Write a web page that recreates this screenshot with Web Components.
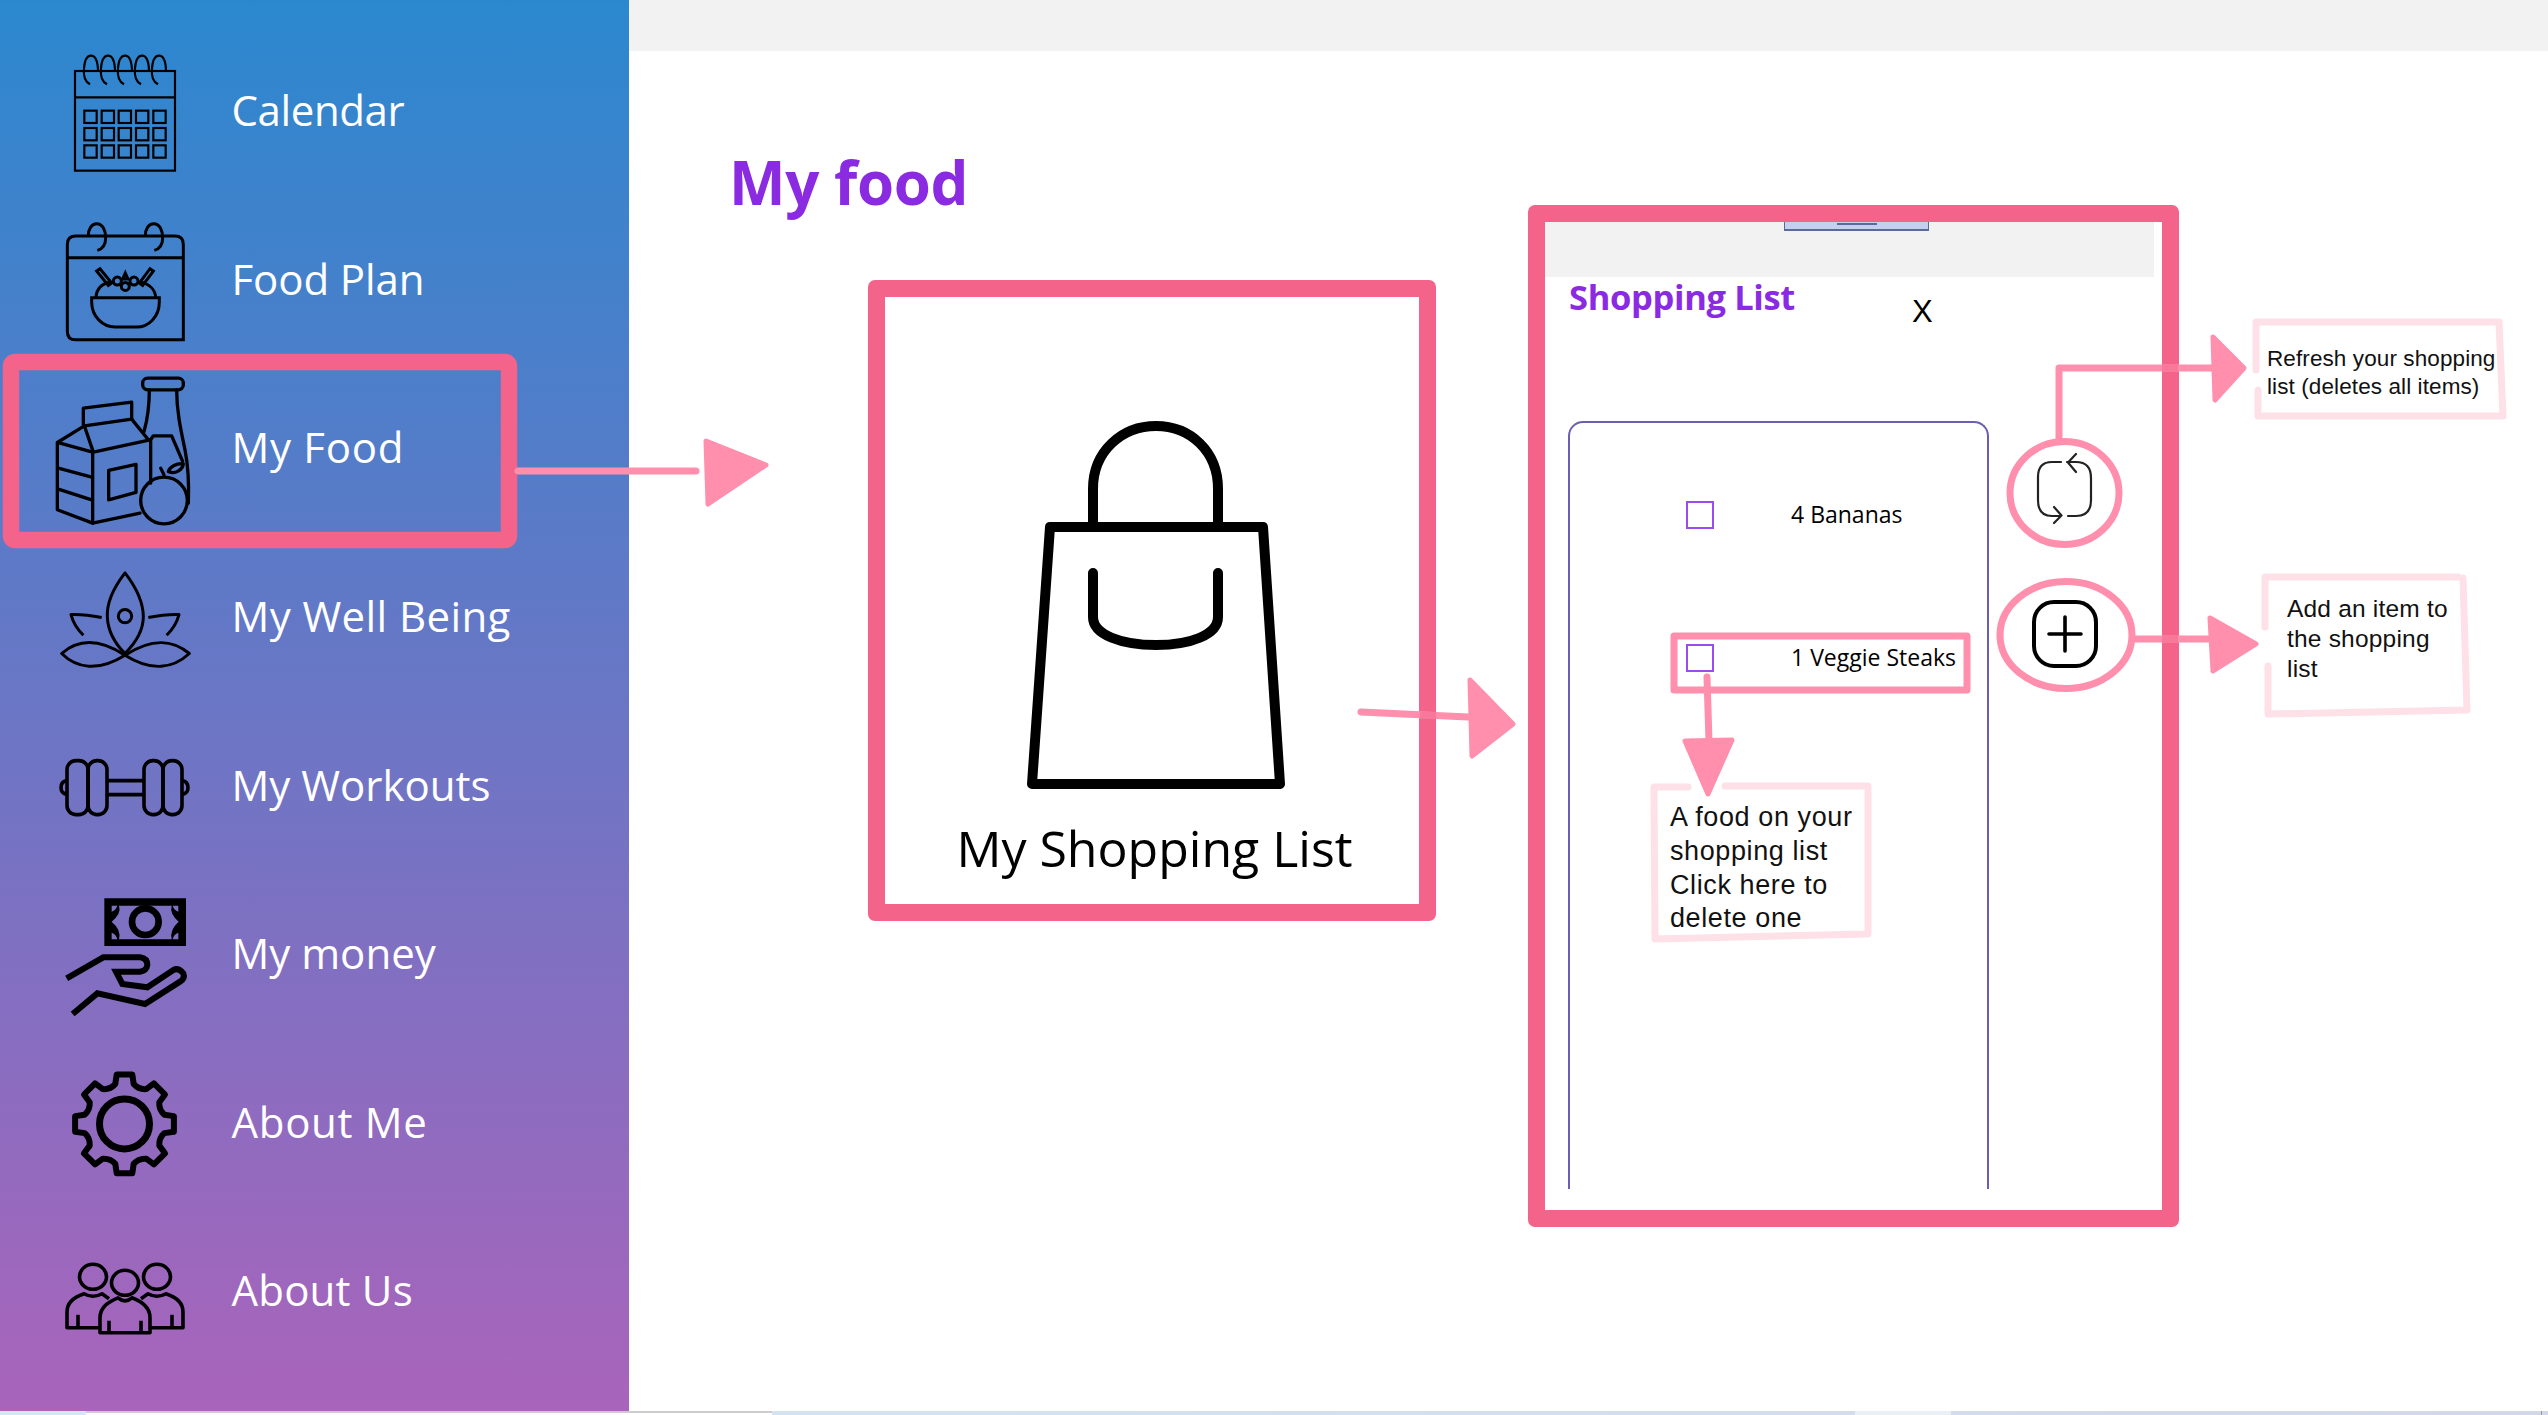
<!DOCTYPE html>
<html lang="en"><head><meta charset="utf-8"><title>My food</title>
<style>
html,body{margin:0;padding:0;background:#fff;overflow:hidden}
body{font-family:"Open Sans","Noto Sans",sans-serif}
</style></head><body>
<app-shell>
  <side-nav slot="nav">
    <nav-item row="0" icon="calendar" style="--ls:-.4px">Calendar</nav-item>
    <nav-item row="1" icon="foodplan" style="--ls:-.1px">Food Plan</nav-item>
    <nav-item row="2" icon="myfood" style="--ls:.7px">My Food</nav-item>
    <nav-item row="3" icon="lotus" style="--ls:.4px">My Well Being</nav-item>
    <nav-item row="4" icon="dumbbell">My Workouts</nav-item>
    <nav-item row="5" icon="money">My money</nav-item>
    <nav-item row="6" icon="gear" style="--ls:.7px">About Me</nav-item>
    <nav-item row="7" icon="people" style="--ls:.2px">About Us</nav-item>
  </side-nav>
  <page-main slot="main">
    <shopping-card>My Shopping List</shopping-card>
    <phone-panel>
      <list-item>4 Bananas</list-item>
      <list-item>1 Veggie Steaks</list-item>
    </phone-panel>
  </page-main>
  <annotation-layer slot="over"></annotation-layer>
  <call-out slot="over" style="left:2267px;top:345px;--ls:.1px;--fs:22.5px;--lh:28px">Refresh your shopping
list (deletes all items)</call-out>
  <call-out slot="over" style="left:2287px;top:594px;--ls:.2px;--fs:24.5px;--lh:30px">Add an item to
the shopping
list</call-out>
  <call-out slot="over" style="left:1670px;top:801px;--ls:.6px;--fs:27px;--lh:33.8px">A food on your
shopping list
Click here to
delete one</call-out>
  <status-strip slot="strip"></status-strip>
</app-shell>
<script>
function def(name, html, extra){
  const t=document.createElement('template'); t.innerHTML=html;
  customElements.define(name, class extends HTMLElement{
    constructor(){super();this.attachShadow({mode:'open'}).appendChild(t.content.cloneNode(true));}
    connectedCallback(){ if(extra) extra.call(this); }
  });
}
def('app-shell',`<style>
:host{display:block;position:relative;width:2548px;height:1415px;overflow:hidden}
.row{display:flex;height:1411px}
</style>
<div class="row"><slot name="nav"></slot><slot name="main"></slot></div>
<slot name="over"></slot><slot name="strip"></slot>`);

def('side-nav',`<style>
:host{display:flex;flex-direction:column;flex:0 0 629px;width:629px;height:1411px;box-sizing:border-box;padding-top:26px;
background:linear-gradient(180deg,#2b88cf 0%,#a964bb 100%)}
</style><slot></slot>`);

const gear=(()=>{const cx=124.5,cy=1123.5;let d='';const P=(r,a)=>{const t=(a-90)*Math.PI/180;return (cx+r*Math.cos(t)).toFixed(1)+' '+(cy+r*Math.sin(t)).toFixed(1)};
for(let i=0;i<8;i++){const a=i*45;d+=(i?'L':'M')+P(41,a-13)+' L'+P(50,a-9)+' L'+P(50,a+9)+' L'+P(41,a+13)+' Q'+P(37,a+22.5)+' '+P(41,a+32);}
return d+'Z';})();
const q=(s)=>`<g transform="translate(40 40) scale(.33333)">${s}</g>`;
const ICONS={
calendar:q(`<g fill="none" stroke="#000" stroke-width="6.5"><rect x="105" y="93" width="300" height="299"/><path d="M105 172H405"/>
${[0,1,2,3,4].map(i=>`<path d="M${150+i*51} 133C${135+i*51} 125 ${130+i*51} 105 ${132+i*51} 85C${134+i*51} 60 ${142+i*51} 47 ${153+i*51} 47C${165+i*51} 47 ${173+i*51} 62 ${174+i*51} 92"/>`).join('')}
${[212,264,316].map(y=>[133,185,236,288,340].map(x=>`<rect x="${x}" y="${y}" width="37" height="37"/>`).join('')).join('')}</g>`),
foodplan:q(`<g fill="none" stroke="#000" stroke-width="9"><path d="M430 898H107Q82 898 82 873V612Q82 587 107 587H405Q430 587 430 612Z"/><path d="M82 652H430"/>
<path d="M145 587C145 565 155 550 170 550C188 550 197 570 197 592C197 610 190 625 172 630"/><path d="M316 587C316 565 326 550 341 550C359 550 368 570 368 592C368 610 361 625 343 630"/>
<path d="M155 772V785C155 830 190 860 225 860H290C325 860 358 830 358 785V772Z"/><path d="M168 770C170 745 185 730 212 725M300 725C325 730 345 745 347 770"/>
<circle cx="232" cy="722" r="12"/><circle cx="256" cy="738" r="12"/><circle cx="282" cy="722" r="12"/><path d="M256 698L264 716H248Z"/>
<path d="M170 692L180 685L215 728L205 735Z"/><path d="M340 692L330 685L298 728L308 735Z"/></g>`),
myfood:`<g transform="translate(40 360) scale(.33333)" fill="none" stroke="#000" stroke-width="10" stroke-linejoin="round" stroke-linecap="round">
<path d="M130 195V145L275 127V178"/><path d="M133 198L275 178"/><path d="M133 198L160 277L330 240"/><path d="M275 178L325 240"/><path d="M133 198L52 248V450L158 490V277L52 248"/>
<path d="M55 325L155 352M55 388L155 420M158 490L300 460"/><path d="M206 332L288 314V398L206 420Z"/>
<rect x="308" y="55" width="122" height="35" rx="15"/><path d="M328 90C328 130 325 170 312 215M410 90C410 150 420 200 435 270C445 320 447 380 445 430"/>
<path d="M332 240L340 228H395L428 305M332 240V370"/><circle cx="372" cy="422" r="70"/><path d="M385 335C390 320 410 310 430 312C428 330 405 345 385 335ZM372 345L362 325"/></g>`,
lotus:`<g transform="translate(40 360) scale(.33333)" fill="none" stroke="#000" stroke-width="9" stroke-linejoin="round">
<path d="M255 638C215 690 200 730 202 770C204 820 235 860 255 880C275 860 310 820 310 770C310 730 295 690 255 638Z"/><circle cx="255" cy="768" r="20"/>
<path d="M65 880C110 840 170 830 255 885C175 935 110 925 65 880Z"/><path d="M448 880C400 840 340 830 255 885C335 935 400 925 448 880Z"/>
<path d="M185 772C150 765 120 762 93 763C100 790 115 810 130 825"/><path d="M325 772C360 765 390 762 417 763C410 790 395 810 380 825"/></g>`,
dumbbell:`<g fill="none" stroke="#000" stroke-width="3.6"><rect x="67" y="761" width="21" height="54" rx="9"/><rect x="88" y="761" width="19" height="54" rx="9"/><rect x="144" y="761" width="19" height="54" rx="9"/><rect x="163" y="761" width="19" height="54" rx="9"/>
<path d="M107 781H144M107 795H144M67 781Q61 782 61 788Q61 794 67 795M182 781Q188 782 188 788Q188 794 182 795"/></g>`,
money:`<g transform="translate(40 880) scale(.33333)"><path fill="#000" fill-rule="evenodd" d="M193 55H438V198H193ZM237 77Q245 100 215 125Q245 150 237 178H395Q388 150 416 125Q388 100 395 77ZM215 77H232Q228 90 215 95ZM415 77H398Q402 90 415 95ZM215 178H232Q228 162 215 158ZM415 178H398Q402 162 415 158Z"/>
<circle cx="316" cy="125" r="40" fill="none" stroke="#000" stroke-width="20"/>
<path fill="none" stroke="#000" stroke-width="18" d="M80 295L190 232H300Q322 235 322 255Q320 272 300 275H228L247 312L322 322L400 270Q415 262 430 280Q436 295 420 305L315 372L172 340L98 402"/></g>`,
gear:`<path d="${gear}" fill="none" stroke="#000" stroke-width="6" stroke-linejoin="round"/><circle cx="124.5" cy="1123.5" r="25" fill="none" stroke="#000" stroke-width="7"/>`,
people:`<g fill="none" stroke="#000" stroke-width="3.6" stroke-linejoin="round"><ellipse cx="93" cy="1277" rx="13.5" ry="12.5"/><ellipse cx="125" cy="1283" rx="13.5" ry="12.5"/><ellipse cx="157" cy="1277" rx="13.5" ry="12.5"/>
<path d="M100 1333V1318C100 1306 111 1301 118 1298Q125 1304 132 1298C140 1301 150 1306 150 1318V1333Z"/><path d="M109 1321V1333M141 1321V1333"/>
<path d="M99 1328H67V1312C67 1301 78 1296 84 1294Q93 1299 102 1294L109 1299"/><path d="M78 1315V1328"/>
<path d="M151 1328H183V1312C183 1301 172 1296 166 1294Q157 1299 148 1294L141 1299"/><path d="M172 1315V1328"/></g>`
};
def('nav-item',`<style>
:host{display:flex;align-items:center;height:168.6px;flex:0 0 168.6px;color:#fff;font:400 42px/1 "Open Sans","Noto Sans",sans-serif;letter-spacing:var(--ls,0)}
svg{flex:0 0 230px;width:230px;height:168.6px;display:block;overflow:visible}
span{padding-left:1.5px;white-space:nowrap}
</style><svg id="i"></svg><span><slot></slot></span>`,function(){
  const r=+this.getAttribute('row');const s=this.shadowRoot.getElementById('i');
  s.setAttribute('viewBox',`0 ${26+168.6*r} 230 168.6`);
  s.setAttribute('role','img');
  s.innerHTML=ICONS[this.getAttribute('icon')];
});

def('page-main',`<style>
:host{display:flex;flex-direction:column;flex:1;min-width:0;background:#fff}
.top{height:51px;background:#f2f2f2;flex:none}
h1{margin:0;padding:106px 0 0 100px;height:48px;font:700 60px/51px "Open Sans","Noto Sans",sans-serif;color:#8a2be2;letter-spacing:-.4px}
.stage{display:flex;align-items:flex-start;gap:92px;padding-left:239px}
</style><div class="top"></div><h1>My food</h1><div class="stage"><slot></slot></div>`);

def('shopping-card',`<style>
:host{display:flex;flex-direction:column;align-items:center;box-sizing:border-box;width:568px;height:641px;margin-top:75px;flex:none;
border:17px solid #f4648a;border-radius:7px;padding:124px 0 0 5px;background:#fff;font:400 50px/1 "Open Sans","Noto Sans",sans-serif;color:#000}
svg{width:258px;height:369px;display:block;flex:none;margin-left:3px}
.t{margin-top:33px;white-space:nowrap}
</style>
<svg viewBox="1027 422 258 369" fill="none" stroke="#000" stroke-width="10" stroke-linejoin="round" stroke-linecap="round">
<path d="M1050 528H1263L1280 785H1032Z"/>
<path d="M1093 526V490C1093 452 1122 427 1156 427C1190 427 1218 452 1218 490V526"/>
<path d="M1093 574V618C1093 636 1122 646 1156 646C1190 646 1218 636 1218 618V574"/>
</svg><div class="t"><slot></slot></div>`);

def('phone-panel',`<style>
:host{display:block;box-sizing:border-box;width:651px;height:1022px;flex:none;border:17px solid #f4648a;border-radius:7px;background:#fff;font-family:"Open Sans","Noto Sans",sans-serif}
.band{height:55px;width:609px;background:#f2f2f2;padding-left:239px;box-sizing:border-box}
.tab{width:145px;height:9px;box-sizing:border-box;background:#c5d0ee;border:solid #5a6a9a;border-width:0 1px 2px 1px;display:flex;justify-content:center}
.tab i{display:block;width:40px;height:2px;background:#5a6a9a;margin-top:1px}
.head{display:flex;height:144px;padding-left:24px}
b{font:700 34.5px/40px "Open Sans","Noto Sans",sans-serif;color:#8a2be2;letter-spacing:-.35px;white-space:nowrap;width:343px;flex:none}
.x{font:400 31px/30px "Liberation Sans",sans-serif;color:#000;margin-top:20px}
.list{margin-left:23px;width:421px;height:768px;box-sizing:border-box;border:solid #6a5fb0;border-width:2px 2px 0 2px;border-radius:15px 15px 0 0;padding:20px 0 0 0}
</style><div class="band"><div class="tab"><i></i></div></div>
<div class="head"><b>Shopping List</b><span class="x">X</span></div>
<div class="list"><slot></slot></div>`);

def('list-item',`<style>
:host{display:flex;align-items:center;height:143px;font:400 23px/1 "Open Sans","Noto Sans",sans-serif;color:#000;white-space:nowrap}
i{display:block;box-sizing:border-box;width:28px;height:28px;border:2px solid #9a4cf0;margin-left:116px;margin-right:77px;flex:none}
</style><i></i><span><slot></slot></span>`);

def('call-out',`<style>
:host{display:block;position:absolute;white-space:pre;font:400 var(--fs)/var(--lh) "Liberation Sans",Arial,sans-serif;letter-spacing:var(--ls);color:#111}
</style><slot></slot>`);

const P='#ff8fad',H='#f4648a',L='#fde0e8';
def('annotation-layer',`<style>
:host{display:block;position:absolute;left:0;top:0;width:2548px;height:1411px;pointer-events:none}
svg{display:block}
</style>
<svg width="2548" height="1411" viewBox="0 0 2548 1411" fill="none" stroke-linecap="round" stroke-linejoin="round">
<rect x="11" y="362" width="498" height="178" rx="4" stroke="${H}" stroke-width="16.5"/>
<g stroke="${L}" stroke-width="7">
<path d="M2256 370V322H2499L2503 416H2258V390"/>
<path d="M2265 627V577H2458M2463 578L2467 710L2268 714V666"/>
<path d="M1688 787H1654L1655 939L1868 934V786H1725"/>
</g>
<g stroke="${P}" stroke-width="7">
<rect x="1674" y="636" width="293" height="54"/>
<path d="M1707 677L1709 742"/>
<path d="M518 471H696"/>
<path d="M1361 712L1468 717"/>
<path d="M2059 438V368H2213"/>
<path d="M2136 639H2208"/>
<ellipse cx="2064.5" cy="493" rx="54.5" ry="51.5"/>
<ellipse cx="2066" cy="635" rx="66" ry="53.5"/>
</g>
<g fill="${P}" stroke="${P}" stroke-width="5">
<path d="M706 441L766 465L708 504Z"/>
<path d="M1470 680L1513 724L1472 756Z"/>
<path d="M1685 741L1732 740L1708 794Z"/>
<path d="M2213 337L2244 368L2215 400Z"/>
<path d="M2210 618L2256 644L2213 671Z"/>
</g>
<g stroke="#f7789a" stroke-width="7" stroke-linecap="butt"><path d="M2162 368H2178M2162 639H2178M1420 715.5H1436"/></g>
<g stroke="#222" stroke-width="2.2">
<path d="M2061 462H2052Q2038 462 2038 477V500Q2038 516 2052 516H2061M2054 507L2061.5 515.500L2054 523"/>
<path d="M2067 462H2076Q2091 462 2091 478V500Q2091 516 2076 516H2068M2076 454L2068 462.500L2076 472"/>
</g>
<g stroke="#000">
<rect x="2034" y="602" width="62" height="64" rx="20" stroke-width="4"/>
<path d="M2049 634H2081M2065 617V651" stroke-width="3.600"/>
</g>
</svg>`);

def('status-strip',`<style>
:host{display:flex;position:absolute;left:0;bottom:0;width:2548px;height:4px;background:linear-gradient(90deg,#d2e9f3,#d3d8e9)}
.tab{margin-left:86px;width:686px;box-sizing:border-box;background:#fff;border-top:2px solid #ccc;flex:none}
.seg{margin-left:1083px;width:96px;background:#e9f0f6;flex:none}
.end{margin-left:590px;width:1px;background:#999;flex:none}
</style><div class="tab"></div><div class="seg"></div><div class="end"></div>`);
</script>
</body></html>
